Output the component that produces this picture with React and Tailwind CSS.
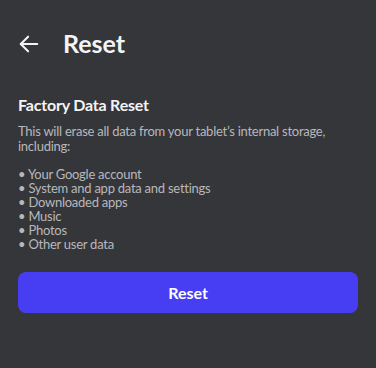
import React from "react";

const items = [
  "Your Google account",
  "System and app data and settings",
  "Downloaded apps",
  "Music",
  "Photos",
  "Other user data",
];

export default function App() {
  return (
    <div className="min-h-screen w-full bg-[#35363a] font-['Lato',sans-serif]">
      <div className="flex items-center px-[18px] pt-[30px] h-[57px]">
        <svg width="22" height="22" viewBox="0 0 24 24" fill="none" stroke="#f4f4f5" strokeWidth="2.2" strokeLinecap="round" strokeLinejoin="round">
          <path d="M21 12H3" />
          <path d="M11 4l-8 8 8 8" />
        </svg>
        <h1 className="ml-[23px] text-[25px] font-bold text-[#f4f4f5] leading-none">Reset</h1>
      </div>

      <div className="px-[18px] pt-[38px]">
        <h2 className="text-[16px] font-bold tracking-[-0.2px] text-[#f4f4f5] leading-[20px]">Factory Data Reset</h2>
        <p className="mt-[9px] text-[13px] tracking-[-0.25px] leading-[15px] text-[#b8b8bc]">
          This will erase all data from your tablet’s internal storage, including:
        </p>
        <ul className="mt-[13px] text-[13px] tracking-[-0.25px] leading-[14px] text-[#b8b8bc]">
          {items.map((item) => (
            <li key={item}>• {item}</li>
          ))}
        </ul>
        <button className="mt-[21px] flex h-[41px] w-full items-center justify-center rounded-[8px] bg-[#473ef4] text-[16px] font-bold text-white">
          Reset
        </button>
      </div>
    </div>
  );
}
